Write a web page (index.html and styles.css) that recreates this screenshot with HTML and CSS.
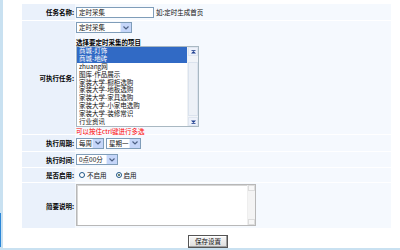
FILE: index.html
```html
<!DOCTYPE html>
<html>
<head>
<meta charset="utf-8">
<link rel="stylesheet" href="styles.css">
</head>
<body>
<div class="frame">
  <div class="form">
    <div class="row r1">
      <div class="lab">任务名称:</div>
      <div class="val inline">
        <span class="input">定时采集</span>
        <span class="hint">如:定时生成首页</span>
      </div>
    </div>
    <div class="row r2">
      <div class="lab">可执行任务:</div>
      <div class="val stack">
        <span class="sel w56"><span class="st">定时采集</span><span class="arr"><svg width="6" height="4" viewBox="0 0 6 4"><path d="M0.5 0.5 L3 3 L5.5 0.5" fill="none" stroke="#4d6185" stroke-width="1.2"/></svg></span></span>
        <div class="subt">选择要定时采集的项目</div>
        <div class="list">
          <div class="items">
            <div class="it on">商城-灯饰</div>
            <div class="it on">商城-地砖</div>
            <div class="it">zhuang网</div>
            <div class="it">图库-作品展示</div>
            <div class="it">家装大学-橱柜选购</div>
            <div class="it">家装大学-地板选购</div>
            <div class="it">家装大学-家具选购</div>
            <div class="it">家装大学-小家电选购</div>
            <div class="it">家装大学-装修常识</div>
            <div class="it">行业资讯</div>
          </div>
          <div class="sb">
            <span class="sbb"><svg width="5" height="4" viewBox="0 0 5 4"><path d="M0 3.5 L2.5 1 L5 3.5Z" fill="#1f3f8f"/><rect x="0.5" y="0" width="4" height="0.8" fill="#1f3f8f"/></svg></span>
            <span class="sbt"><span class="thumb"></span></span>
            <span class="sbb"><svg width="5" height="4" viewBox="0 0 5 4"><path d="M0 0.5 L2.5 3 L5 0.5Z" fill="#1f3f8f"/><rect x="0.5" y="3.2" width="4" height="0.8" fill="#1f3f8f"/></svg></span>
          </div>
        </div>
        <div class="red">可以按住ctrl键进行多选</div>
      </div>
    </div>
    <div class="row r3">
      <div class="lab">执行周期:</div>
      <div class="val inline">
        <span class="sel w28"><span class="st">每周</span><span class="arr"><svg width="6" height="4" viewBox="0 0 6 4"><path d="M0.5 0.5 L3 3 L5.5 0.5" fill="none" stroke="#4d6185" stroke-width="1.2"/></svg></span></span>
        <span class="sel w35"><span class="st">星期一</span><span class="arr"><svg width="6" height="4" viewBox="0 0 6 4"><path d="M0.5 0.5 L3 3 L5.5 0.5" fill="none" stroke="#4d6185" stroke-width="1.2"/></svg></span></span>
      </div>
    </div>
    <div class="row r4">
      <div class="lab">执行时间:</div>
      <div class="val inline">
        <span class="sel w42"><span class="st">0点00分</span><span class="arr"><svg width="6" height="4" viewBox="0 0 6 4"><path d="M0.5 0.5 L3 3 L5.5 0.5" fill="none" stroke="#4d6185" stroke-width="1.2"/></svg></span></span>
      </div>
    </div>
    <div class="row r5">
      <div class="lab">是否启用:</div>
      <div class="val inline">
        <span class="radio"></span><span class="rt">不启用</span>
        <span class="radio chk"></span><span class="rt">启用</span>
      </div>
    </div>
    <div class="row r6">
      <div class="lab">简要说明:</div>
      <div class="val top">
        <div class="ta">
          <div class="tasb"><span class="tb"></span><span class="tb"></span></div>
        </div>
      </div>
    </div>
  </div>
  <div class="btnrow"><span class="btn">保存设置</span></div>
</div>
</body>
</html>
```
FILE: styles.css
```css
html, body {
  margin: 0;
  padding: 0;
  background: #ffffff;
}
body {
  width: 400px;
  height: 250px;
  overflow: hidden;
  font-family: "Noto Sans CJK SC", "DejaVu Sans", sans-serif;
  font-size: 6.5px;
  color: #111;
}
.frame {
  box-sizing: border-box;
  width: 400px;
  height: 250px;
  border-bottom: 2px solid #c9e1f1;
  padding: 4px 0 0 22px;
  background:
    linear-gradient(#2a86d8, #2a86d8) 0 213px / 1px 34px no-repeat,
    linear-gradient(#c9e1f1, #c9e1f1) 0 0 / 3px 100% no-repeat,
    #ffffff;
}
.form {
  width: 369px;
  display: flex;
  flex-direction: column;
  gap: 1px;
  background: #ffffff;
}
.row {
  display: flex;
}
.lab {
  width: 53px;
  flex: none;
  background: #eaf1fb;
  font-weight: bold;
  padding-right: 1px;
  box-sizing: border-box;
  display: flex;
  align-items: center;
  justify-content: flex-end;
  color: #000;
}
.val {
  flex: 1;
  background: #f5f9fe;
  padding-left: 1px;
  box-sizing: border-box;
}
.inline {
  display: flex;
  align-items: center;
  gap: 2px;
}
.stack {
  display: flex;
  flex-direction: column;
  align-items: flex-start;
  padding-top: 1px;
}
.top {
  padding-top: 1px;
}
.r1 { height: 16px; }
.r2 { height: 113px; }
.r3 { height: 16px; }
.r4 { height: 15px; }
.r5 { height: 14px; }
.r6 { height: 45px; }

.input {
  box-sizing: border-box;
  width: 78px;
  height: 11px;
  border: 1px solid #7f9db9;
  background: #fff;
  line-height: 9px;
  padding-left: 2px;
  margin-top: 1px;
}
.hint {
  line-height: 9px;
}
.sel {
  box-sizing: border-box;
  height: 11px;
  border: 1px solid #7f9db9;
  background: #fff;
  display: flex;
  align-items: stretch;
}
.sel .st {
  flex: 1;
  line-height: 9px;
  padding-left: 2px;
  overflow: hidden;
  white-space: nowrap;
}
.sel .arr {
  width: 10px;
  background: #c5d6f9;
  border-left: 1px solid #e6eefc;
  display: flex;
  align-items: center;
  justify-content: center;
}
.w56 { width: 56px; }
.w28 { width: 28px; }
.w35 { width: 35px; }
.w42 { width: 42px; }

.subt {
  font-weight: bold;
  margin-top: 5px;
  line-height: 8px;
  height: 8px;
  color: #000;
}
.list {
  box-sizing: border-box;
  width: 123px;
  height: 81px;
  border: 1px solid #a9b8c2;
  background: #fff;
  display: flex;
  flex: none;
}
.items {
  flex: 1;
}
.it {
  height: 7.9px;
  line-height: 7.9px;
  padding-left: 2px;
  white-space: nowrap;
}
.it.on {
  background: #316ac5;
  color: #fff;
}
.sb {
  width: 10px;
  display: flex;
  flex-direction: column;
  background: #f1f4f8;
  border-left: 1px solid #eef1f4;
}
.sbb {
  height: 9px;
  background: #eef2fb;
  border: 1px solid #dfe6f0;
  box-sizing: border-box;
  display: flex;
  align-items: center;
  justify-content: center;
}
.sbt {
  flex: 1;
  display: flex;
  flex-direction: column;
  padding: 6px 0 1px 0;
}
.thumb {
  flex: 1;
  border: 1px solid #dbe3ee;
  background: #edf1f7;
}
.red {
  color: #ff0000;
  line-height: 7px;
  height: 7px;
  margin-top: 1px;
}

.radio {
  box-sizing: border-box;
  width: 6px;
  height: 6px;
  border-radius: 50%;
  border: 1px solid #1e5688;
  background: #fff;
  margin-left: 3px;
  position: relative;
}
.radio.chk::after {
  content: "";
  position: absolute;
  left: 1px;
  top: 1px;
  width: 2px;
  height: 2px;
  border-radius: 50%;
  background: #3c5a3c;
}
.rt {
  margin-right: 4px;
  line-height: 9px;
}
.ta {
  box-sizing: border-box;
  width: 180px;
  height: 42px;
  border: 1px solid #b8b8b8;
  box-shadow: inset 1px 1px 0 #d6d6d6;
  background: #fff;
  display: flex;
  justify-content: flex-end;
}
.tasb {
  width: 7px;
  display: flex;
  flex-direction: column;
  justify-content: space-between;
  background: #f4f4f4;
  border-left: 1px solid #eeeeee;
}
.tb {
  height: 6px;
  border: 1px solid #dddddd;
  box-sizing: border-box;
  background: #f7f7f7;
}
.btnrow {
  width: 369px;
  display: flex;
  justify-content: center;
  padding-top: 7px;
  padding-left: 3px;
  box-sizing: border-box;
}
.btn {
  box-sizing: border-box;
  width: 40px;
  height: 13px;
  border: 1px solid #555;
  background: linear-gradient(#f8f8f8, #dcdcdc);
  box-shadow: inset -1px -1px 0 #a0a0a0, inset 1px 1px 0 #fff;
  text-align: center;
  line-height: 11px;
  color: #111;
}
```
